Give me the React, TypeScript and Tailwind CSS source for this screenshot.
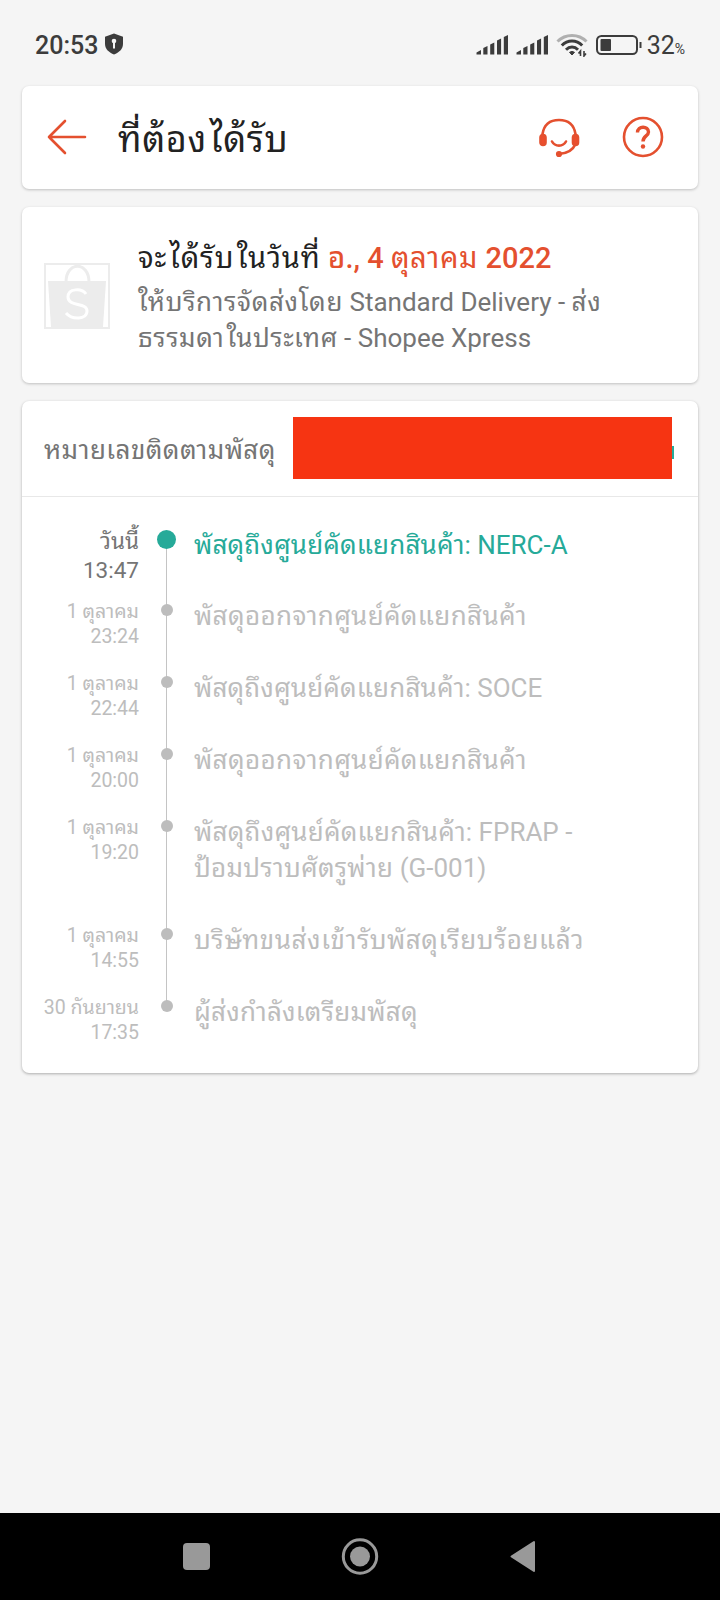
import React from "react";

const events = [
  {
    day: "วันนี้",
    time: "13:47",
    lines: ["พัสดุถึงศูนย์คัดแยกสินค้า: NERC-A"],
    height: "h-[71px]",
    tracking: "tracking-[0.007em]",
    active: true,
  },
  { day: "1 ตุลาคม", time: "23:24", lines: ["พัสดุออกจากศูนย์คัดแยกสินค้า"], height: "h-[72px]", tracking: "tracking-[0.014em]" },
  { day: "1 ตุลาคม", time: "22:44", lines: ["พัสดุถึงศูนย์คัดแยกสินค้า: SOCE"], height: "h-[72px]", tracking: "tracking-[0.007em]" },
  { day: "1 ตุลาคม", time: "20:00", lines: ["พัสดุออกจากศูนย์คัดแยกสินค้า"], height: "h-[72px]", tracking: "tracking-[0.014em]" },
  {
    day: "1 ตุลาคม",
    time: "19:20",
    lines: ["พัสดุถึงศูนย์คัดแยกสินค้า: FPRAP -", "ป้อมปราบศัตรูพ่าย (G-001)"],
    height: "h-[108px]",
  },
  {
    day: "1 ตุลาคม",
    time: "14:55",
    lines: ["บริษัทขนส่งเข้ารับพัสดุเรียบร้อยแล้ว"],
    height: "h-[72px]",
    tracking: "tracking-[0.021em]",
  },
  { day: "30 กันยายน", time: "17:35", lines: ["ผู้ส่งกำลังเตรียมพัสดุ"], height: "h-[72px]" },
];

// Thai runs are set a little wider than the Latin ones, with room before ไ and ใ
const Thai = ({ text, className = "tracking-[0.010em]" }: { text: string; className?: string }) => (
  <>
    {text.split(/([\u0E00-\u0E7F]+)/).map((run, i) =>
      i % 2 === 0 ? (
        run
      ) : (
        <span key={i} className={className}>
          {run.split(/(?=[ไใ])/).map((part, j) => (
            <span key={j} className={j > 0 ? "ml-[0.08em]" : ""}>
              {part}
            </span>
          ))}
        </span>
      ),
    )}
  </>
);

const Signal = () => (
  <svg width="33" height="22" viewBox="0 0 33 22" fill="#3c3c3c">
    <path d="M.5 20.500V18.500L5 16V20.500ZM7.300 20.500V14L11.500 12V20.500ZM14.200 20.500V10.500L18.300 8.500V20.500ZM21 20.500V6.500L25.100 4.500V20.500ZM27.800 20.500V3L32 1V20.500Z" />
  </svg>
);

const StatusBar = () => (
  <div className="flex h-[86px] items-center pt-[4px] pr-[35px] pl-[35px] text-[#3c3c3c]">
    <span className="text-[25px] leading-none font-medium">20:53</span>
    <svg className="-mt-[3px] ml-[6px]" width="20" height="22" viewBox="0 0 20 22">
      <path d="M10 .5L19 3.800V11C19 16 15 19.500 10 21.500C5 19.500 1 16 1 11V3.800Z" fill="#3c3c3c" />
      <circle cx="10" cy="8" r="2.300" fill="#f5f5f5" />
      <path d="M9 9H11V15.500H9Z" fill="#f5f5f5" />
    </svg>
    <div className="ml-auto flex items-center">
      <Signal />
      <div className="ml-[7px]">
        <Signal />
      </div>
      <svg className="ml-[7px]" width="32" height="24" viewBox="0 0 32 24" fill="none" strokeWidth="3">
        <path d="M1.500 8.500C9.500 .5 22.500 .5 30.500 8.500" stroke="#b0b0b0" />
        <path d="M5.800 12.500C11.500 6.500 20.500 6.500 26.200 12.500" stroke="#3c3c3c" />
        <path d="M10 16.700C13.500 13.200 18.500 13.200 22 16.700" stroke="#3c3c3c" />
        <path d="M13.500 19.300Q16 17.500 18.500 19.300L16 22Z" fill="#3c3c3c" stroke="#3c3c3c" strokeWidth="1" />
        <path d="M24.500 23V18L22.500 20.500M28 18V23L30 20.500" stroke="#3c3c3c" strokeWidth="1.600" />
      </svg>
      <svg className="-mt-[1px] ml-[7px]" width="48" height="22" viewBox="0 0 48 22">
        <rect x="2" y="2" width="40" height="18" rx="4.500" fill="none" stroke="#3c3c3c" strokeWidth="2" />
        <rect x="5.500" y="5" width="10.500" height="12" rx="1" fill="#3c3c3c" />
        <path d="M44.500 8H46.500V14H44.500Z" fill="#3c3c3c" />
      </svg>
      <span className="ml-[4px] text-[25px] leading-none">32</span>
      <span className="mt-[7px] text-[14px] leading-none">%</span>
    </div>
  </div>
);

const Header = () => (
  <header className="flex h-[103px] items-center rounded-[7px] bg-white pr-[34px] pl-[25px] shadow-[0_1px_3px_rgba(0,0,0,0.22)]">
    <svg className="-mt-[1px]" width="40" height="36" viewBox="0 0 40 36" fill="none" stroke="#e4502f" strokeWidth="2.600" strokeLinecap="round" strokeLinejoin="round">
      <path d="M38 18H2M18 2L2 18L18 34" />
    </svg>
    <h1 className="mt-[5px] ml-[31px] text-[36px] leading-[50px] whitespace-nowrap text-[#222]">
      <Thai text="ที่ต้องได้รับ" className="tracking-[0.018em]" />
    </h1>
    <svg className="-mt-[1px] ml-auto" width="42" height="42" viewBox="0 0 42 42" fill="none" stroke="#e4502f" strokeWidth="2.600" strokeLinecap="round">
      <path d="M4.500 18C6 9 12 4 21 4S36 9 37.500 18M37.500 28C35 34 29 37.500 21 38M14 25.500C17 31 25 31 28 25.500" />
      <rect x="2.500" y="19" width="5" height="10" rx="2.500" fill="#ee4d2d" />
      <rect x="35" y="19" width="5" height="10" rx="2.500" fill="#ee4d2d" />
      <circle cx="21" cy="38" r="1.800" fill="#ee4d2d" />
    </svg>
    <svg className="-mt-[1px] ml-[42px]" width="42" height="42" viewBox="0 0 42 42" fill="none" stroke="#e4502f">
      <circle cx="21" cy="21" r="19" strokeWidth="2.600" />
      <path d="M15.500 16.500C15.500 9.500 26.500 9.500 26.500 16C26.500 20 21 20 21 25.500" strokeWidth="3.400" />
      <circle cx="21" cy="30.500" r="2.200" fill="#e4502f" stroke="none" />
    </svg>
  </header>
);

const DeliveryCard = () => (
  <section className="mt-[18px] flex h-[176px] rounded-[7px] bg-white pl-[22px] shadow-[0_1px_3px_rgba(0,0,0,0.22)]">
    <div className="mt-[56px] h-[66px] w-[66px] border-2 border-[#ececec]">
      <svg width="62" height="62" viewBox="0 0 62 62">
        <path d="M20 17C20 -4 43 -4 43 17" fill="none" stroke="#ececec" strokeWidth="3" />
        <path d="M2 16H60L57 62H5Z" fill="#ececec" />
        <path d="M40 29C36 23 22 23 22 32C22 42 41 37 41 46C41 55 26 55 20 48" fill="none" stroke="#fff" strokeWidth="3" />
      </svg>
    </div>
    <div className="ml-[28px] whitespace-nowrap">
      <p className="mt-[31px] text-[29px] leading-[40px] text-[#222]">
        <Thai text="จะได้รับในวันที่ " className="tracking-[0.032em]" />
        <span className="font-medium text-[#e4502f]">
          <Thai text="อ., 4 " />
          <span className="font-normal">
            <Thai text="ตุลาคม" className="tracking-[0.024em]" />
          </span>{" "}
          2022
        </span>
      </p>
      <p className="mt-[6px] text-[26px] leading-[36px] text-[#757575]">
        <Thai text="ให้บริการจัดส่งโดย Standard Delivery - ส่ง" className="tracking-[0.026em]" />
        <br />
        <Thai text="ธรรมดาในประเทศ - Shopee Xpress" className="tracking-[0.023em]" />
      </p>
    </div>
  </section>
);

const Timeline = () => (
  <div className="pt-[24px]">
    {events.map((event, idx) => (
      <div key={idx} className={`flex ${event.height}`}>
        <div
          className={`w-[117px] text-right whitespace-nowrap ${
            event.active ? "pt-[6px] text-[22.5px] leading-[29px] text-[#757575]" : "pt-[7px] text-[19.5px] leading-[25px] text-[#bdbdbd]"
          }`}
        >
          <div>{event.day}</div>
          <div>{event.time}</div>
        </div>
        <div className="relative w-[55px] shrink-0">
          {idx < events.length - 1 && <div className="absolute top-[18px] left-[27px] h-full w-px bg-[#c4c4c4]" />}
          <div
            className={
              event.active
                ? "absolute top-[9px] left-[18px] size-[19px] rounded-full bg-[#26aa99]"
                : "absolute top-[12px] left-[22px] size-[12px] rounded-full bg-[#bdbdbd]"
            }
          />
        </div>
        <div className={`pt-[6px] text-[26px] leading-[36px] whitespace-nowrap ${event.active ? "text-[#26aa99]" : "text-[#bdbdbd]"}`}>
          {event.lines.map((line) => (
            <div key={line}>
              <Thai text={line} className={event.tracking} />
            </div>
          ))}
        </div>
      </div>
    ))}
  </div>
);

const NavBar = () => (
  <nav className="mt-auto h-[87px] bg-black">
    <svg width="720" height="87" viewBox="0 0 720 87" fill="#999">
      <rect x="183" y="30" width="27" height="27" rx="4" />
      <circle cx="360" cy="43.500" r="16.700" fill="none" stroke="#999" strokeWidth="3" />
      <circle cx="360" cy="43.500" r="10" />
      <path d="M511.500 43.500L534 29V58Z" stroke="#999" strokeWidth="2" strokeLinejoin="round" />
    </svg>
  </nav>
);

const App = () => {
  return (
    <div className="flex h-[1600px] w-[720px] flex-col overflow-hidden bg-[#f5f5f5] font-[Roboto,'Noto_Sans_Thai_Looped','Noto_Looped_Thai',Loma,Garuda,Waree,'Noto_Sans_Thai',sans-serif]">
      <StatusBar />
      <main className="mx-[22px]">
        <Header />
        <DeliveryCard />
        <section className="mt-[18px] h-[672px] rounded-[7px] bg-white shadow-[0_1px_3px_rgba(0,0,0,0.3)]">
          <div className="flex h-[96px] items-center border-b border-[#e8e8e8] pl-[22px]">
            <span className="mt-[2px] w-[249px] text-[26px] leading-[36px] whitespace-nowrap text-[#757575]">
              <Thai text="หมายเลขติดตามพัสดุ" className="tracking-[0.017em]" />
            </span>
            <div className="-mt-[2px] h-[62px] w-[379px] bg-[#f63412]" />
            <div className="mt-[8px] h-[13px] w-[2px] bg-[#26aa99]" />
          </div>
          <Timeline />
        </section>
      </main>
      <NavBar />
    </div>
  );
};

export default App;
